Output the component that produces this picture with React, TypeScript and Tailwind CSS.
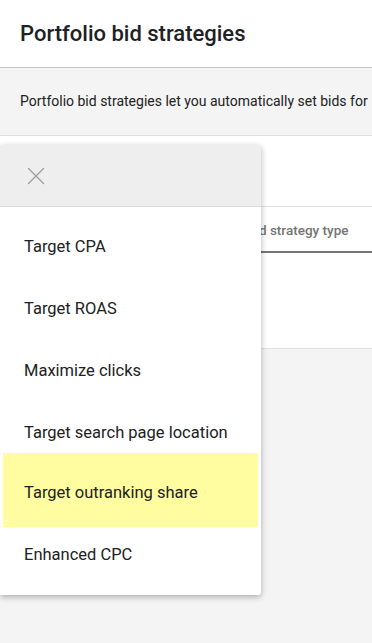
import { X } from "lucide-react";

const items = [
  "Target CPA",
  "Target ROAS",
  "Maximize clicks",
  "Target search page location",
];

function StrategyMenu() {
  return (
    <div className="absolute left-0 top-[145px] w-[261px] bg-white rounded-r-[3px] shadow-[0_2px_6px_rgba(0,0,0,0.3)] overflow-hidden">
      <div className="h-[62px] bg-[#eeeeee] border-b border-[#dadada] flex items-center pl-[21px]">
        <X size={30} strokeWidth={1.1} className="text-[#9e9e9e]" />
      </div>
      <div className="pt-[9px] pb-[12px] px-[3px] text-[16.5px] text-[#212121]">
        {items.map((item) => (
          <div key={item} className="h-[62px] flex items-center pl-[21px]">
            {item}
          </div>
        ))}
        <div className="relative -mt-[11px] h-[74px] pt-[6px] flex items-center pl-[21px] bg-[#fffd9f]">
          Target outranking share
        </div>
        <div className="h-[56px] flex items-center pl-[21px]">Enhanced CPC</div>
      </div>
    </div>
  );
}

export default function App() {
  return (
    <div className="relative min-h-[643px] bg-[#f4f4f4] font-['Roboto',sans-serif] overflow-hidden">
      <div className="h-[68px] bg-white border-b border-[#c4c4c4] shadow-[0_1px_2px_rgba(0,0,0,0.15)] flex items-center px-5">
        <h1 className="text-[22px] font-medium text-[#202124]">Portfolio bid strategies</h1>
      </div>
      <div className="h-[68px] bg-[#f4f4f4] border-b border-[#e0e0e0] flex items-center px-5">
        <p className="text-[14px] text-[#212121] whitespace-nowrap">
          Portfolio bid strategies let you automatically set bids for
        </p>
      </div>
      <div className="bg-white border-b border-[#e0e0e0]">
        <div className="h-[71px] border-b border-[#e0e0e0]"></div>
        <div className="h-[46px] flex items-center pt-[3px] border-b-2 border-[#757575] pl-[247px]">
          <span className="text-[13.5px] font-medium text-[#757575] whitespace-nowrap">Bid strategy type</span>
        </div>
        <div className="h-[95px]"></div>
      </div>
      <StrategyMenu />
    </div>
  );
}
